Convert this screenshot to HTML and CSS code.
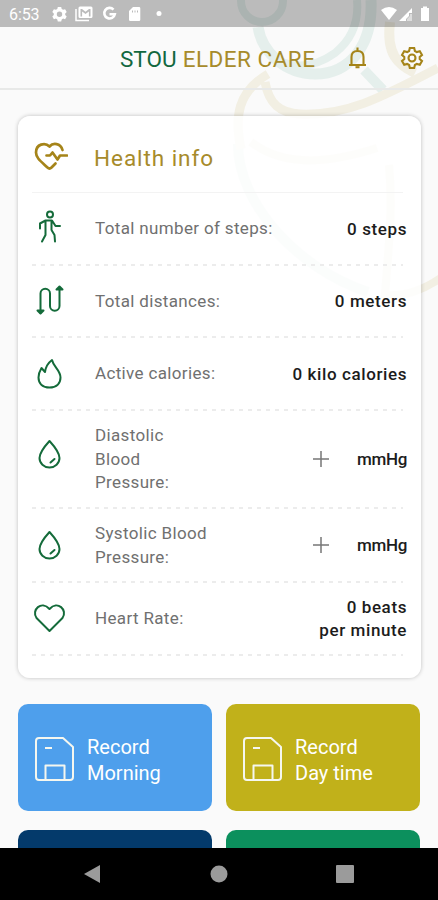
FILE: index.html
```html
<!DOCTYPE html>
<html lang="en">
<head>
  <meta charset="utf-8">
  <title>STOU Elder Care</title>
  <link rel="stylesheet" href="styles.css">
</head>
<body>
  <div class="screen">
    <svg class="watermark" viewBox="0 0 438 320" fill="none">
      <g stroke="#e5efec">
        <circle cx="262" cy="1" r="21" stroke-width="8"/>
        <path d="M258 27C262 52 285 74 315 74C350 74 373 45 371 0" stroke-width="11"/>
        <path d="M279 61q28 12 56-8 25-20 22-53" stroke-width="8"/>
        <path d="M364 70l19 20" stroke-width="10"/>
        <path d="M238 144c0 60 60 125 130 148" stroke-width="10"/>
      </g>
      <g stroke="#f2efe3">
        <path d="M268 74c-30 18-34 42-27 75M265 82c4 22 15 31 35 32 45 2 79-15 138-46" stroke-width="9"/>
        <path d="M390 22c-4 32 8 43 25 51" stroke-width="10"/>
        <path d="M251 142c35 27 82 20 126 6M389 165c4 42 0 78-4 130q29 3 60-20" stroke-width="8"/>
      </g>
    </svg>

    <div class="status-bar">
      <span class="time">6:53</span>
      <svg class="status-left" width="112" height="18" viewBox="0 0 112 18" fill="#fff">
        <path fill-rule="evenodd" d="M6.8 2h3.4l.5 2 1.4.8 2-.6 1.6 2.8-1.5 1.5v1.4l1.5 1.5-1.6 2.8-2-.6-1.4.8-.5 2H6.8l-.5-2-1.4-.8-2 .6-1.6-2.8 1.5-1.5V8.500L1.300 7l1.600-2.800 2 .6 1.400-.8zM8.500 6.500a2.700 2.700 0 1 0 0 5.400a2.700 2.700 0 1 0 0-5.400z"/>
        <path d="M25 4v11.500h13" fill="none" stroke="#fff" stroke-width="1.500"/>
        <path fill-rule="evenodd" d="M29 1.500h11q1.500 0 1.500 1.500v8.500q0 1.500-1.500 1.500H29q-1.500 0-1.500-1.500V3q0-1.500 1.500-1.500zM29.500 4v7.500h1.600V6.500l3.400 2.600 3.400-2.600v5h1.600V4H38l-3.500 2.700L31 4z"/>
        <path d="M62.500 4.600a5.300 5.300 0 1 0 1.300 4.600h-5.300" fill="none" stroke="#fff" stroke-width="2.600"/>
        <path fill-rule="evenodd" d="M82 2h6q1.300 0 1.300 1.300v11.400q0 1.300-1.300 1.300h-8.700q-1.300 0-1.300-1.300V6zM81 5.500v2h1v-2zm2.500 0v2h1v-2zm2.500 0v2h1v-2z"/>
        <circle cx="108" cy="8.500" r="2.500"/>
      </svg>
      <svg class="status-right" width="52" height="16" viewBox="0 0 52 16" fill="#fff">
        <path d="M2 4q8-6 16 0l-8 10z"/>
        <path d="M20 15L33 2v5h-3v3l-3 3v2z"/>
        <path d="M33 8v7h-5v-2l3-3V8z" opacity=".5"/>
        <path d="M42 2h2V.5h4V2h2v13h-8z"/>
      </svg>
    </div>

    <div class="header">
      <h1><span>STOU</span> ELDER CARE</h1>
      <svg class="bell" width="20" height="24" viewBox="0 0 20 24">
        <path d="M2 19h17M4.500 19V11q0-6 6-6t6 6v8M10.500 1.500V5"/>
        <path d="M8.500 21.200h4"/>
      </svg>
      <svg class="gear" width="24" height="24" viewBox="0 0 24 24">
        <path d="M9.800 2h4.400l.7 3 1.900 1.100 3-.9 2.200 3.800-2.300 2v2l2.300 2-2.200 3.800-3-.9-1.900 1.100-.7 3H9.800l-.7-3-1.900-1.100-3 .9L2 15l2.300-2v-2L2 9l2.200-3.800 3 .9L9.100 5z"/>
        <circle cx="12" cy="12" r="3.500"/>
      </svg>
    </div>

    <div class="card">
      <div class="row title">
        <svg class="icon gold" viewBox="0 0 36 32">
          <path d="M30.500 9C28.500 2 21 1.500 17.500 5.500C13 1 4 3 4 11.500C4 17 9 20.500 15.500 26.500Q17.500 28.500 19.500 26.500L23.500 22.500"/>
          <path d="M14.500 14.500h3.500l2.500-3 5 7 2.500-4H35"/>
        </svg>
        <h2>Health info</h2>
      </div>
      <div class="row">
        <svg class="icon" viewBox="0 0 36 36">
          <circle cx="18" cy="4.500" r="3"/>
          <path d="M8 18.500v-5l5.500-3H20l3.500 5.500H28M13.500 11v14L10 31.500M19.500 12v8M19.500 20l3 5 .5 6.500"/>
        </svg>
        <span class="label">Total number of steps:</span>
        <span class="value">0 steps</span>
      </div>
      <div class="row">
        <svg class="icon" viewBox="0 0 36 36">
          <path d="M8.500 30V10.500a4.750 4.750 0 0 1 9.500 0V23a4.750 4.750 0 0 0 9.500 0V5"/>
          <path d="M5.500 27.500h6l-3 3zM24.500 6.500h6l-3-3z"/>
        </svg>
        <span class="label">Total distances:</span>
        <span class="value">0 meters</span>
      </div>
      <div class="row">
        <svg class="icon" viewBox="0 0 36 36">
          <path d="M20 4C21.500 11 28.500 14 28.500 21.500C28.500 28 24 31.500 17.500 31.500C11 31.500 6.500 28 6.500 21.500Q6.500 17 9.500 12L13 16Q14 8.500 20 4z"/>
        </svg>
        <span class="label">Active calories:</span>
        <span class="value">0 kilo calories</span>
      </div>
      <div class="row diastolic">
        <svg class="icon drop" viewBox="0 0 36 36">
          <path d="M17.500 5Q27.500 16 27.500 22a10 9.500 0 0 1-20 0Q7.500 16 17.500 5zM18.500 26.500l4-3.500"/>
        </svg>
        <span class="label narrow">Diastolic Blood Pressure:</span>
        <svg class="plus" width="16" height="16" viewBox="0 0 16 16"><path d="M8 0v16M0 8h16"/></svg>
        <span class="value unit">mmHg</span>
      </div>
      <div class="row systolic">
        <svg class="icon" viewBox="0 0 36 36">
          <path d="M17.500 5Q27.500 16 27.500 22a10 9.500 0 0 1-20 0Q7.500 16 17.500 5zM18.500 26.500l4-3.500"/>
        </svg>
        <span class="label">Systolic Blood<br>Pressure:</span>
        <svg class="plus" width="16" height="16" viewBox="0 0 16 16"><path d="M8 0v16M0 8h16"/></svg>
        <span class="value unit">mmHg</span>
      </div>
      <div class="row">
        <svg class="icon" viewBox="0 0 36 36">
          <path d="M17.500 31L4.500 18C-1 10 9.500 0 17.500 9C25.500 0 36 10 30.500 18z"/>
        </svg>
        <span class="label">Heart Rate:</span>
        <span class="value">0 beats<br>per minute</span>
      </div>
    </div>

    <div class="buttons">
      <div class="button blue">
        <svg class="disk" viewBox="0 0 40 44">
          <path d="M4 1h24l10 9v30q0 3-3 3H4q-3 0-3-3V4q0-3 3-3zM10.500 43V28.500h19V43M10 11h7"/>
        </svg>
        <span>Record<br>Morning</span>
      </div>
      <div class="button olive">
        <svg class="disk" viewBox="0 0 40 44">
          <path d="M4 1h24l10 9v30q0 3-3 3H4q-3 0-3-3V4q0-3 3-3zM10.500 43V28.500h19V43M10 11h7"/>
        </svg>
        <span>Record<br>Day time</span>
      </div>
      <div class="button navy"></div>
      <div class="button green"></div>
    </div>
  </div>

  <div class="nav-bar">
    <svg width="18" height="20" viewBox="0 0 18 20"><path d="M1 10L17 1v18z"/></svg>
    <svg width="18" height="18" viewBox="0 0 18 18"><circle cx="9" cy="9" r="8.500"/></svg>
    <svg width="18" height="18" viewBox="0 0 18 18"><rect width="18" height="18" rx="1"/></svg>
  </div>
</body>
</html>
```
FILE: styles.css
```css
* {
  box-sizing: border-box;
}

body {
  margin: 0;
  height: 900px;
  overflow: hidden;
  font-family: Roboto, "Liberation Sans", sans-serif;
  background-color: #fafafa;
}

svg {
  flex: none;
}

.screen {
  position: relative;
  height: 848px;
  overflow: hidden;
}

.watermark {
  position: absolute;
  top: 0;
  left: 0;
  width: 438px;
  height: 320px;
}

.status-bar,
.header,
.card,
.buttons {
  position: relative;
}

.status-bar {
  display: flex;
  align-items: center;
  height: 27px;
  padding: 1px 8px 0 9px;
  background-color: rgba(0, 0, 0, 0.25);
  color: white;
}

.time {
  width: 42px;
  font-size: 16px;
  letter-spacing: -0.1px;
}

.status-right {
  margin-left: auto;
  margin-right: -1px;
}

.header {
  display: flex;
  align-items: center;
  height: 63px;
  padding: 0 15px 0 120px;
  border-bottom: 2px solid #e8e9e8;
}

.header h1 {
  width: 227px;
  margin: 2px 0 0;
  font-size: 22.5px;
  font-weight: 400;
  letter-spacing: 0.5px;
  white-space: nowrap;
  color: #a78b2b;
}

.header h1 span {
  letter-spacing: 0;
  color: #12683f;
}

.header svg {
  fill: none;
  stroke: #a58419;
  stroke-width: 2.1;
}

.header .gear {
  margin-left: auto;
  margin-right: -1px;
}

.card {
  height: 562px;
  margin: 26px 17px 0 18px;
  padding: 0 18px 0 14px;
  border-radius: 12px;
  background-color: rgba(255, 255, 255, 0.84);
  box-shadow: 0 0 4px rgba(0, 0, 0, 0.24);
}

/* the dashes are a gradient, a dashed border spaces them too tightly */
.row {
  display: flex;
  align-items: center;
  height: 72.7px;
  padding-bottom: 2px;
  background: repeating-linear-gradient(90deg, #ececec 0 4px, transparent 4px 9px) 0 100% / 100% 2px no-repeat;
}

.row.title {
  height: 77px;
  padding-top: 6px;
  padding-bottom: 0;
  background: none;
  border-bottom: 1px solid #f3f3f3;
}

.row.diastolic {
  height: 98px;
}

.row.systolic {
  height: 74px;
}

.row h2 {
  margin: 1px 0 0 26px;
  font-size: 22.5px;
  font-weight: 400;
  letter-spacing: 0.95px;
  color: #a78b2b;
}

.icon {
  width: 36px;
  height: 36px;
  fill: none;
  stroke: #146b3a;
  stroke-width: 2;
  stroke-linejoin: round;
  stroke-linecap: round;
}

.icon.gold {
  height: 32px;
  stroke: #a58419;
  stroke-width: 2.7;
}

.icon.drop {
  margin-top: -10px;
}

.label {
  margin-top: 1px;
  margin-left: 27px;
  font-size: 17px;
  line-height: 23.5px;
  letter-spacing: 0.35px;
  color: #707070;
}

.label.narrow {
  width: 90px;
}

.value {
  margin-top: 2px;
  margin-left: auto;
  margin-right: -4px;
  font-size: 17px;
  font-weight: 500;
  line-height: 23.5px;
  letter-spacing: 0.6px;
  text-align: right;
  color: #1c1c1c;
}

.plus {
  margin-left: auto;
  fill: none;
  stroke: #777;
  stroke-width: 1.5;
}

.value.unit {
  width: 78px;
  margin-left: 0;
  letter-spacing: -0.3px;
}

.buttons {
  display: grid;
  grid-template-columns: 194px 194px;
  gap: 19px 14px;
  margin: 26px 0 0 18px;
}

.button {
  display: flex;
  align-items: center;
  height: 107px;
  padding: 3px 0 1px 17px;
  border-radius: 10px;
  font-size: 20px;
  line-height: 26px;
  color: white;
}

.button span {
  margin-top: 2px;
  margin-left: 12px;
}

.disk {
  width: 40px;
  height: 44px;
  fill: none;
  stroke: #f5f7ef;
  stroke-width: 2;
  stroke-linejoin: round;
}

.blue {
  background-color: #4e9fec;
}

.olive {
  background-color: #c1b11a;
}

.navy {
  background-color: #043a6b;
}

.green {
  background-color: #0c905d;
}

.nav-bar {
  display: flex;
  align-items: center;
  justify-content: space-between;
  height: 52px;
  padding: 0 84px 0 83px;
  background-color: black;
}

.nav-bar svg {
  fill: #9b9b9b;
}
```
